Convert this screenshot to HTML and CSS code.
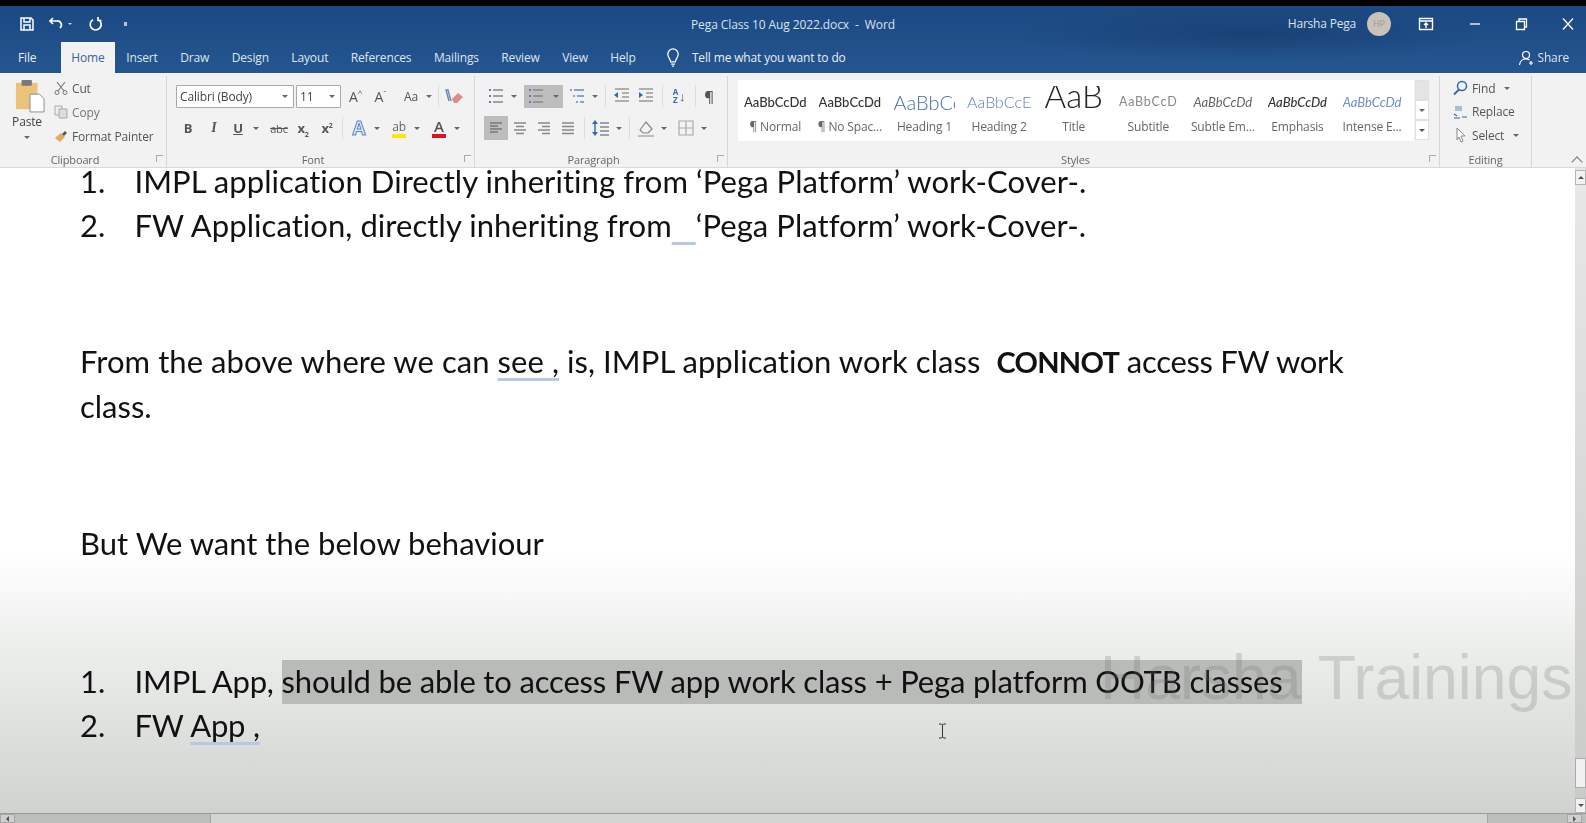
FILE: index.html
```html
<!DOCTYPE html>
<html lang="en">

<head>
    <meta charset="UTF-8" />
    <title>Pega Class 10 Aug 2022.docx - Word</title>
    <link rel="stylesheet" href="styles.css">
</head>

<body>
    <div class="app">
        <div class="blackbar"></div>

        <header class="chrome">
            <div class="titlebar">
                <div class="qat">
                    <svg class="qi" viewBox="0 0 16 16"><path d="M2 2h10l2 2v10H2zM5 2v4h6V2M5 14V9h6v5" fill="none" stroke="#fff" stroke-width="1.5"/></svg>
                    <svg class="qi" viewBox="0 0 16 16"><path d="M5 2L2 5l3 3M2 5h7a4 4 0 0 1 3 7" fill="none" stroke="#fff" stroke-width="1.7"/></svg>
                    <span class="qchev"></span>
                    <svg class="qi redo" viewBox="0 0 16 16"><path d="M10 3.5a5.5 5.5 0 1 1-5 .2M10 1v3.5h3.5" fill="none" stroke="#fff" stroke-width="1.7"/></svg>
                    <span class="qdot"></span>
                </div>
                <div class="doctitle">Pega Class 10 Aug 2022.docx &nbsp;-&nbsp; Word</div>
                <div class="winctl">
                    <span class="username">Harsha Pega</span>
                    <span class="avatar">HP</span>
                    <svg class="wi display" viewBox="0 0 16 14"><path d="M1.5 1.5h13v11h-13zM1.5 4h13M8 11V6M6 8l2-2 2 2" fill="none" stroke="#fff" stroke-width="1.4"/></svg>
                    <svg class="wi minw" viewBox="0 0 16 14"><path d="M3 7h10" stroke="#fff" stroke-width="1.3"/></svg>
                    <svg class="wi resw" viewBox="0 0 16 14"><path d="M3.5 4.5h8v8h-8zM6 4.500V2h7.500v8h-2" fill="none" stroke="#fff" stroke-width="1.3"/></svg>
                    <svg class="wi closew" viewBox="0 0 16 14"><path d="M3 1.500l10 11M13 1.500l-10 11" stroke="#fff" stroke-width="1.3"/></svg>
                </div>
            </div>
            <nav class="tabs">
                <span class="tab file">File</span>
                <span class="tab active">Home</span>
                <span class="tab">Insert</span>
                <span class="tab">Draw</span>
                <span class="tab">Design</span>
                <span class="tab">Layout</span>
                <span class="tab">References</span>
                <span class="tab">Mailings</span>
                <span class="tab">Review</span>
                <span class="tab">View</span>
                <span class="tab">Help</span>
                <svg class="bulb" viewBox="0 0 14 20"><path d="M4.500 14.500C4 11 1.500 10 1.500 6.500a5.500 5.500 0 0 1 11 0C12.500 10 10 11 9.500 14.500zM5 17h4M6 19h2" fill="none" stroke="#fff" stroke-width="1.3"/></svg>
                <span class="tellme">Tell me what you want to do</span>
                <span class="share">
                    <svg class="shareicon" viewBox="0 0 16 16"><path d="M8 1.500a3.500 3.500 0 1 1 0 7 3.500 3.500 0 0 1 0-7zM1.500 15c.5-4 3-6 6.500-6 1.500 0 2.500.4 3.500 1M11 13h4M13 11v4" fill="none" stroke="#fff" stroke-width="1.2"/></svg>
                    Share
                </span>
            </nav>
        </header>

        <section class="ribbon">
            <div class="group g-clipboard">
                <div class="gbody clip">
                    <div class="paste">
                        <svg class="pasteicon" viewBox="0 0 32 36"><rect x="1" y="4" width="23" height="28" fill="#eac27a"/><rect x="7" y="1" width="11" height="6" rx="1" fill="#77797a"/><path d="M16 16h10l5 5v14H16z" fill="#fff" stroke="#8a8a8a"/></svg>
                        <span>Paste</span>
                        <span class="cv"></span>
                    </div>
                    <div class="cliplist">
                        <div class="clipitem">
                            <svg class="ci" viewBox="0 0 14 14"><path d="M3 1l7 9M11 1L4 10" stroke="#777" stroke-width="1.100" fill="none"/><circle cx="3" cy="11.500" r="2" fill="none" stroke="#777"/><circle cx="11" cy="11.500" r="2" fill="none" stroke="#777"/></svg>
                            Cut
                        </div>
                        <div class="clipitem faded">
                            <svg class="ci" viewBox="0 0 14 14"><path d="M1 1h7v9H1z" fill="#eee" stroke="#aaa"/><path d="M5 4h8v9H5z" fill="#ddd" stroke="#aaa"/></svg>
                            Copy
                        </div>
                        <div class="clipitem">
                            <svg class="ci" viewBox="0 0 14 14"><path d="M1 9l6-5 4 4-5 5z" fill="#e3a95c"/><path d="M8 5l3-3 2 2-3 3z" fill="#555"/></svg>
                            Format Painter
                        </div>
                    </div>
                </div>
                <div class="glabel">Clipboard<span class="launcher"></span></div>
            </div>

            <div class="group g-font">
                <div class="gbody">
                    <div class="row">
                        <div class="combo fontname">Calibri (Body)<span class="cv"></span></div>
                        <div class="combo fontsize">11<span class="cv"></span></div>
                        <span class="ib grow">A<sup>^</sup></span>
                        <span class="ib grow">A<sup>ˇ</sup></span>
                        <span class="ib case">Aa</span><span class="ca"><i class="cv"></i></span>
                        <span class="vsep"></span>
                        <svg class="ib clearfmt" viewBox="0 0 24 20"><path d="M7 15L4 4h2l3 11" fill="none" stroke="#6a86b5" stroke-width="1.400"/><path d="M10 13l6-6 5 4-6 6h-3z" fill="#e5858e"/></svg>
                    </div>
                    <div class="row row2">
                        <span class="ib bold">B</span>
                        <span class="ib ital">I</span>
                        <span class="ib und">U</span><span class="ca"><i class="cv"></i></span>
                        <span class="ib abc">abc</span>
                        <span class="ib sub">x<sub>2</sub></span>
                        <span class="ib sub">x<sup>2</sup></span>
                        <span class="vsep"></span>
                        <span class="ib fx">A</span><span class="ca"><i class="cv"></i></span>
                        <span class="ib colorbtn"><span class="hl">ab</span></span><span class="ca"><i class="cv"></i></span>
                        <span class="ib colorbtn"><span class="red">A</span></span><span class="ca"><i class="cv"></i></span>
                    </div>
                </div>
                <div class="glabel">Font<span class="launcher"></span></div>
            </div>

            <div class="group g-para">
                <div class="gbody">
                    <div class="row">
                        <svg class="ib" viewBox="0 0 24 20"><use href="#bullets"/></svg><span class="ca"><i class="cv"></i></span>
                        <span class="activebtn"><svg class="ib" viewBox="0 0 24 20"><use href="#bullets"/></svg><span class="ca"><i class="cv"></i></span></span>
                        <svg class="ib" viewBox="0 0 24 20"><path d="M5 4h2M9 4h10M8 10h2M12 10h7M11 16h2M15 16h4" stroke="#6d88b4" stroke-width="1.500"/></svg><span class="ca"><i class="cv"></i></span>
                        <span class="vsep"></span>
                        <svg class="ib" viewBox="0 0 24 20"><path d="M5 3h14M12 7h7M12 11h7M5 15h14" stroke="#999" stroke-width="1.400"/><path d="M4 9l4-3v6z" fill="#2e6cb3"/></svg>
                        <svg class="ib" viewBox="0 0 24 20"><path d="M5 3h14M12 7h7M12 11h7M5 15h14" stroke="#999" stroke-width="1.400"/><path d="M9 9L5 6v6z" fill="#2e6cb3"/></svg>
                        <span class="vsep"></span>
                        <span class="ib sort"><span class="az">A<br>Z</span><span class="arr">↓</span></span>
                        <span class="vsep"></span>
                        <span class="ib pilcrow">¶</span>
                    </div>
                    <div class="row row2">
                        <svg class="ib activeleft" viewBox="0 0 24 24"><path d="M6 7h12M6 10h8M6 13h12M6 16h8" stroke="#777" stroke-width="1.400"/></svg>
                        <svg class="ib" viewBox="0 0 24 20"><path d="M6 5h12M8 8.500h8M6 12h12M8 15.500h8" stroke="#888" stroke-width="1.400"/></svg>
                        <svg class="ib" viewBox="0 0 24 20"><path d="M6 5h12M10 8.500h8M6 12h12M10 15.500h8" stroke="#888" stroke-width="1.400"/></svg>
                        <svg class="ib" viewBox="0 0 24 20"><path d="M6 5h12M6 8.500h12M6 12h12M6 15.500h12" stroke="#888" stroke-width="1.400"/></svg>
                        <span class="vsep"></span>
                        <svg class="ib" viewBox="0 0 24 20"><path d="M11 5h9M11 9h9M11 13h9M11 17h9" stroke="#888" stroke-width="1.300"/><path d="M6 3v14" stroke="#2e6cb3" stroke-width="1.400"/><path d="M3 6l3-4 3 4zM3 14l3 4 3-4z" fill="#2e6cb3"/></svg><span class="ca"><i class="cv"></i></span>
                        <span class="vsep"></span>
                        <svg class="ib" viewBox="0 0 24 20"><path d="M6 12l6-8 6 7-4 4H9zM4 18h16" fill="none" stroke="#888" stroke-width="1.200"/></svg><span class="ca"><i class="cv"></i></span>
                        <svg class="ib borders" viewBox="0 0 24 20"><path d="M5 3h14v14H5zM12 3v14M5 10h14" fill="none" stroke="#aaa" stroke-width="1.200"/></svg><span class="ca"><i class="cv"></i></span>
                    </div>
                </div>
                <div class="glabel">Paragraph<span class="launcher"></span></div>
            </div>

            <div class="group g-styles">
                <div class="gbody gallerywrap">
                    <div class="gallery">
                        <div class="style"><span class="pv normal">AaBbCcDd</span><span class="sl">¶ Normal</span></div>
                        <div class="style"><span class="pv normal">AaBbCcDd</span><span class="sl">¶ No Spac...</span></div>
                        <div class="style"><span class="pv h1">AaBbCc</span><span class="sl">Heading 1</span></div>
                        <div class="style"><span class="pv h2">AaBbCcE</span><span class="sl">Heading 2</span></div>
                        <div class="style"><span class="pv title">AaB</span><span class="sl">Title</span></div>
                        <div class="style"><span class="pv subtitle">AaBbCcD</span><span class="sl">Subtitle</span></div>
                        <div class="style"><span class="pv subtle">AaBbCcDd</span><span class="sl">Subtle Em...</span></div>
                        <div class="style"><span class="pv emph">AaBbCcDd</span><span class="sl">Emphasis</span></div>
                        <div class="style"><span class="pv intense">AaBbCcDd</span><span class="sl">Intense E...</span></div>
                    </div>
                    <div class="galscroll">
                        <span class="gs gs1"></span>
                        <span class="gs"><i class="cv"></i></span>
                        <span class="gs gs3"><i class="cv"></i></span>
                    </div>
                </div>
                <div class="glabel">Styles<span class="launcher"></span></div>
            </div>

            <div class="group g-edit">
                <div class="gbody editlist">
                    <div class="edititem">
                        <svg class="ei" viewBox="0 0 16 16"><circle cx="10" cy="6" r="4.500" fill="none" stroke="#3566a8" stroke-width="1.500"/><path d="M7 9.500L2 14.500" stroke="#3566a8" stroke-width="1.800"/></svg>
                        Find <i class="cv"></i>
                    </div>
                    <div class="edititem">
                        <svg class="ei" viewBox="0 0 16 16"><path d="M2 10l3 2M2 14h6M10 13h5" stroke="#3566a8" stroke-width="1.200"/><path d="M3 2h7v5H3z" fill="#a9bdd6"/></svg>
                        Replace
                    </div>
                    <div class="edititem">
                        <svg class="ei" viewBox="0 0 16 16"><path d="M5 1l8 8H9l2 5-2 1-2-5-2 3z" fill="#fff" stroke="#888"/></svg>
                        Select <i class="cv"></i>
                    </div>
                </div>
                <div class="glabel">Editing</div>
            </div>
            <div class="collapse"></div>
        </section>

        <main class="workspace">
            <div class="doc">
                <div class="block">
                    <div class="li"><span class="num">1.</span><span class="wide">IMPL application Directly inheriting from ‘Pega Platform’ work-Cover-.</span></div>
                    <div class="li"><span class="num">2.</span><span class="wide">FW Application, directly inheriting from<span class="spell"> &nbsp; </span>‘Pega Platform’ work-Cover-.</span></div>
                </div>
                <div class="block">
                    <p class="para"><span class="wide">From the above where we can <span class="spell">see ,</span> is, IMPL application work class &nbsp;</span><b>CONNOT</b><span class="tail"> access FW work</span> class.</p>
                </div>
                <div class="block">
                    <p class="para">But We want the below behaviour</p>
                </div>
                <div class="block">
                    <div class="li"><span class="num">1.</span><span class="narrow">IMPL App, <span class="mark">should be able to access FW app work class + Pega platform OOTB classes</span></span></div>
                    <div class="li"><span class="num">2.</span><span class="narrow">FW <span class="spell">App ,</span></span></div>
                </div>
                <div class="watermark">Harsha Trainings</div>
                <svg class="ibeam" viewBox="0 0 9 16"><path d="M1 1h2.500l1 1 1-1H8M4.500 2v12M1 15h2.500l1-1 1 1H8" fill="none" stroke="#333" stroke-width="1"/></svg>
            </div>
            <div class="vscroll">
                <span class="sbtn"><i class="up"></i></span>
                <span class="vtrack"></span>
                <span class="vthumb"></span>
                <span class="vtrack short"></span>
                <span class="sbtn"><i class="down"></i></span>
            </div>
        </main>

        <div class="hscroll">
            <span class="hbtn"><i class="left"></i></span>
            <span class="hthumb"></span>
            <span class="hbtn"><i class="right"></i></span>
        </div>
    </div>

    <svg class="defs" width="0" height="0">
        <defs>
            <g id="bullets"><path d="M9 4h10M9 10h10M9 16h10" stroke="#888" stroke-width="1.500"/><path d="M5 4h2M5 10h2M5 16h2" stroke="#5a7fb0" stroke-width="2"/></g>
        </defs>
    </svg>
</body>

</html>
```

FILE: styles.css
```css
html,
body {
    margin: 0;
    height: 100%;
    overflow: hidden;
    background: #000;
}

.app {
    width: 1586px;
    height: 823px;
    display: flex;
    flex-direction: column;
    font-family: "Open Sans", sans-serif;
    filter: blur(0.45px);
}

.blackbar {
    height: 6px;
    background: #000;
}

/* title bar + tabs */
.chrome {
    height: 67px;
    background:
        radial-gradient(ellipse 240px 26px at 1250px 28px, rgba(20, 50, 95, 0.45), transparent),
        linear-gradient(#1b4882, #25568f);
    color: #fff;
}

.titlebar {
    height: 35px;
    display: flex;
    align-items: center;
    position: relative;
}

.qat {
    display: flex;
    align-items: center;
    padding-left: 19px;
}

.qi {
    width: 16px;
    height: 16px;
    margin-right: 13px;
}

.qchev {
    width: 0;
    height: 0;
    border: 2.5px solid transparent;
    border-top-color: #cdd8e6;
    margin: 2px 16px 0 -9px;
}

.redo {
    margin-right: 20px;
}

.qdot {
    width: 3px;
    height: 4px;
    background: #b8c6da;
}

.doctitle {
    position: absolute;
    left: 691px;
    top: 10px;
    font-size: 12px;
    color: #d9e2ee;
    letter-spacing: -0.1px;
}

.winctl {
    margin-left: auto;
    display: flex;
    align-items: center;
    padding-right: 10px;
}

.username {
    font-size: 12px;
    color: #d9e2ee;
    margin-right: 11px;
    letter-spacing: -0.2px;
}

.avatar {
    width: 24px;
    height: 24px;
    border-radius: 50%;
    background: #c8c2b8;
    color: #9a9a9a;
    font-size: 9px;
    display: flex;
    align-items: center;
    justify-content: center;
    margin-right: 27px;
}

.wi {
    width: 16px;
    height: 14px;
}

.display {
    margin-right: 33px;
}

.minw {
    margin-right: 30px;
}

.resw {
    margin-right: 31px;
}

.tabs {
    height: 32px;
    display: flex;
    align-items: flex-end;
    font-size: 12px;
    color: #dfe6f0;
    letter-spacing: -0.15px;
}

.tab {
    height: 31px;
    line-height: 32px;
    padding: 0 11.250px;
}

.file {
    padding: 0 0 0 18px;
    width: 43px;
    color: #e8edf4;
}

.active {
    background: #f1f2f1;
    color: #3d6399;
    width: 54px;
    padding: 0;
    text-align: center;
    font-weight: 500;
}

.bulb {
    width: 14px;
    height: 19px;
    margin: 0 0 6px 19px;
}

.tellme {
    margin-left: 12px;
    line-height: 32px;
    height: 31px;
    color: #e9eef5;
}

.share {
    margin-left: auto;
    padding-right: 17px;
    display: flex;
    align-items: center;
    height: 31px;
    font-weight: 500;
}

.shareicon {
    width: 16px;
    height: 16px;
    margin-right: 3px;
}

/* ribbon */
.ribbon {
    height: 95px;
    background: #f1f2f1;
    display: flex;
    position: relative;
    border-bottom: 1px solid #d9d9d9;
    box-sizing: border-box;
    font-size: 12px;
    color: #555;
    letter-spacing: -0.15px;
}

.group {
    display: flex;
    flex-direction: column;
    box-sizing: border-box;
    border-right: 1px solid #d5d6d5;
    height: 91px;
    margin-top: 3px;
}

.gbody {
    flex: 1;
    min-height: 0;
}

.glabel {
    height: 14px;
    line-height: 14px;
    text-align: center;
    font-size: 11px;
    color: #666;
    position: relative;
    padding-right: 24px;
}

.launcher {
    position: absolute;
    right: 3px;
    top: 2px;
    width: 6px;
    height: 6px;
    border: 1px solid #aaa;
    border-width: 1px 0 0 1px;
}

.cv {
    display: inline-block;
    width: 0;
    height: 0;
    border: 3px solid transparent;
    border-top-color: #666;
    border-bottom-width: 0;
}

.g-clipboard {
    width: 167px;
}

.g-clipboard .glabel {
    padding-right: 16px;
}

.clip {
    display: flex;
}

.paste {
    width: 54px;
    display: flex;
    flex-direction: column;
    align-items: center;
    padding-top: 3px;
    color: #444;
}

.pasteicon {
    width: 30px;
    height: 34px;
    margin: 0 0 0 5px;
}

.paste .cv {
    margin-top: 6px;
}

.cliplist {
    display: flex;
    flex-direction: column;
    gap: 6px;
    padding-top: 3px;
}

.clipitem {
    height: 18px;
    display: flex;
    align-items: center;
    gap: 4px;
    color: #555;
}

.faded {
    color: #777;
}

.ci {
    width: 14px;
    height: 14px;
}

.g-font {
    width: 308px;
    padding-left: 9px;
}

.row {
    display: flex;
    align-items: center;
    height: 26px;
    margin-top: 7px;
}

.row2 {
    margin-top: 7px;
    height: 24px;
}

.combo {
    height: 23px;
    box-sizing: border-box;
    border: 1px solid #a9a9a9;
    background: #fff;
    border-radius: 1px;
    display: flex;
    align-items: center;
    justify-content: space-between;
    padding: 0 5px 0 3px;
    color: #444;
    font-size: 12px;
}

.fontname {
    width: 118px;
    margin-right: 2px;
}

.fontsize {
    width: 45px;
    margin-right: 2px;
}

.ib {
    width: 24px;
    height: 24px;
    flex: none;
    display: flex;
    align-items: center;
    justify-content: center;
    color: #555;
}

.ca {
    width: 12px;
    flex: none;
    display: flex;
    justify-content: center;
}

.vsep {
    width: 1px;
    height: 22px;
    flex: none;
    background: #dcdcdc;
    margin: 0 3px;
}

.g-para .vsep {
    margin: 0 4px;
}

.grow {
    font-size: 14px;
    width: 25px;
}

.grow sup {
    font-size: 8px;
    margin-top: -8px;
}

.case {
    margin-left: 6px;
}

.clearfmt {
    height: 20px;
}

.bold {
    font-weight: 700;
    font-size: 13px;
}

.ital {
    font-style: italic;
    font-weight: 700;
    font-family: "Liberation Serif", serif;
    font-size: 14px;
    margin-left: 2px;
}

.und {
    text-decoration: underline;
    font-weight: 700;
    font-size: 13px;
}

.abc {
    text-decoration: line-through;
    font-size: 11px;
    margin-left: 5px;
}

.sub {
    display: block;
    text-align: center;
    font-weight: 700;
    font-size: 13px;
    line-height: 24px;
}

.sub sub,
.sub sup {
    font-size: 7px;
    line-height: 0;
}

.fx {
    font-size: 19px;
    color: #d9e6f5;
    -webkit-text-stroke: 1px #5d8ac4;
    font-weight: 700;
    margin-left: 1px;
}

.colorbtn {
    margin-left: 4px;
}

.hl {
    border-bottom: 4px solid #ffe600;
    font-size: 12px;
    line-height: 15px;
    color: #666;
}

.red {
    border-bottom: 4px solid #e0141c;
    font-size: 15px;
    line-height: 15px;
    font-weight: 600;
    padding: 0 2px;
}

.g-para {
    width: 253px;
    padding-left: 9px;
}

.activebtn {
    display: flex;
    align-items: center;
    width: 39px;
    height: 23px;
    background: #bcbdbc;
    margin-left: 4px;
    margin-right: 2px;
}

.activebtn .ca {
    width: 15px;
}

.sort {
    gap: 1px;
}

.az {
    font-size: 8px;
    line-height: 8px;
    text-align: center;
    color: #2e6cb3;
    font-weight: 700;
}

.arr {
    font-size: 13px;
    color: #555;
}

.pilcrow {
    font-size: 15px;
    color: #555;
    font-weight: 600;
    margin-left: -3px;
}

.activeleft {
    background: #bcbdbc;
}

.borders {
    margin-left: 4px;
}

.g-styles {
    width: 712px;
    padding-left: 10px;
}

.g-styles .glabel {
    padding-right: 26px;
}

.gallerywrap {
    display: flex;
}

.gallery {
    width: 676px;
    height: 61px;
    background: #fff;
    display: flex;
    margin-top: 4px;
    overflow: hidden;
}

.style {
    width: 74.600px;
    flex: none;
    display: flex;
    flex-direction: column;
    align-items: center;
    overflow: hidden;
}

.pv {
    height: 41px;
    flex: none;
    display: flex;
    align-items: center;
    font-family: "Lato", sans-serif;
    font-size: 13px;
    white-space: nowrap;
    letter-spacing: 0;
    color: #333;
    padding-top: 2px;
    box-sizing: border-box;
    overflow: hidden;
}

.normal {
    font-weight: 500;
}

.h1 {
    font-size: 20px;
    color: #4a6fa5;
    font-weight: 300;
    width: 62px;
}

.h2 {
    font-size: 16px;
    color: #5e83b5;
    font-weight: 300;
    width: 64px;
}

.title {
    font-size: 33px;
    color: #222;
    font-weight: 300;
    align-items: flex-start;
    line-height: 18px;
    padding-top: 0;
    height: 24px;
    margin: 6px 0 11px;
}

.subtitle {
    color: #888;
    letter-spacing: 0.8px;
    font-size: 12.500px;
}

.subtle {
    color: #666;
    font-style: italic;
}

.emph {
    font-style: italic;
    font-weight: 500;
    color: #333;
}

.intense {
    color: #6c8fc5;
    font-style: italic;
}

.sl {
    font-size: 12px;
    color: #666;
    line-height: 12px;
}

.galscroll {
    width: 14px;
    margin-top: 4px;
    display: flex;
    flex-direction: column;
    margin-left: 1px;
}

.gs {
    height: 20px;
    background: #fff;
    border: 1px solid #e0e0e0;
    box-sizing: border-box;
    display: flex;
    align-items: center;
    justify-content: center;
}

.gs1 {
    background: #e4e4e4;
}

.gs3 .cv {
    border-top-color: #555;
}

.g-edit {
    width: 92px;
}

.g-edit .glabel {
    padding-right: 0;
}

.editlist {
    padding: 3px 0 0 12px;
    display: flex;
    flex-direction: column;
    gap: 5.500px;
}

.edititem {
    height: 18px;
    display: flex;
    align-items: center;
    gap: 4px;
    color: #555;
}

.edititem .cv {
    margin-left: 5px;
}

.ei {
    width: 16px;
    height: 16px;
}

.collapse {
    position: absolute;
    right: 5px;
    bottom: 1px;
    width: 7px;
    height: 7px;
    border: solid #777;
    border-width: 1px 0 0 1px;
    transform: rotate(45deg);
}

/* document */
.workspace {
    flex: 1;
    min-height: 0;
    display: flex;
}

.doc {
    flex: 1;
    position: relative;
    overflow: hidden;
    padding-left: 80px;
    color: #111;
    background: linear-gradient(#fff 0, #fff 385px, #eef0ee 470px, #d0d2cf 100%);
    font-family: "Lato", sans-serif;
    font-size: 31px;
    line-height: 44px;
    font-variant-ligatures: none;
}

.block {
    margin-top: 93.500px;
}

.block:first-child {
    margin: -9px 0 -2px;
}

.li {
    display: flex;
}

.num {
    width: 54.500px;
    flex: none;
}

.wide {
    letter-spacing: 0.06px;
}

.narrow {
    letter-spacing: -0.16px;
}

.tail {
    letter-spacing: -0.3px;
}

.para {
    margin: 0;
    width: 1290px;
}

.para b {
    font-weight: 700;
    font-size: 29px;
    letter-spacing: -0.7px;
}

.spell {
    text-decoration: underline;
    text-decoration-color: #b6c8e6;
    text-decoration-thickness: 3px;
    text-underline-offset: 5px;
    text-decoration-skip-ink: none;
    white-space: pre-wrap;
}

.mark {
    background: #b9bbb8;
    padding: 2px 20px 4px 0;
}

.watermark {
    position: absolute;
    left: 1100px;
    top: 474px;
    font-family: "Liberation Sans", sans-serif;
    font-size: 62.500px;
    line-height: 70px;
    color: rgba(110, 112, 110, 0.24);
    white-space: nowrap;
}

.ibeam {
    position: absolute;
    left: 938px;
    top: 555px;
    width: 9px;
    height: 16px;
}

.vscroll {
    width: 11px;
    display: flex;
    flex-direction: column;
    background: linear-gradient(#e8e8e8, #c9cbc8);
}

.sbtn {
    height: 15px;
    flex: none;
    background: #f2f2f2;
    border: 1px solid #b5b5b5;
    box-sizing: border-box;
    display: flex;
    align-items: center;
    justify-content: center;
    margin-top: 2px;
}

.vtrack {
    flex: 1;
}

.vtrack.short {
    flex: none;
    height: 8px;
}

.vthumb {
    height: 30px;
    flex: none;
    background: #f0f1f0;
    border: 1px solid #a9aaa9;
    box-sizing: border-box;
}

.up,
.down,
.left,
.right {
    display: block;
    width: 0;
    height: 0;
    border: 3px solid transparent;
}

.up {
    border-bottom-color: #555;
    border-top-width: 0;
}

.down {
    border-top-color: #555;
    border-bottom-width: 0;
}

.left {
    border-right-color: #555;
    border-left-width: 0;
}

.right {
    border-left-color: #555;
    border-right-width: 0;
}

.hscroll {
    height: 10px;
    display: flex;
    background: #bcbebb;
    border-top: 1px solid #9b9d9a;
    box-sizing: border-box;
}

.hbtn {
    width: 15px;
    background: #cfd0cf;
    border: 1px solid #a5a5a5;
    box-sizing: border-box;
    display: flex;
    align-items: center;
    justify-content: center;
}

.hthumb {
    margin: 0 auto 0 195px;
    width: 1276px;
    background: #d3d5d2;
    border-left: 1px solid #a5a5a5;
    border-right: 1px solid #a5a5a5;
}

.hbtn:last-child {
    margin-right: 4px;
}

.defs {
    position: absolute;
}
```
